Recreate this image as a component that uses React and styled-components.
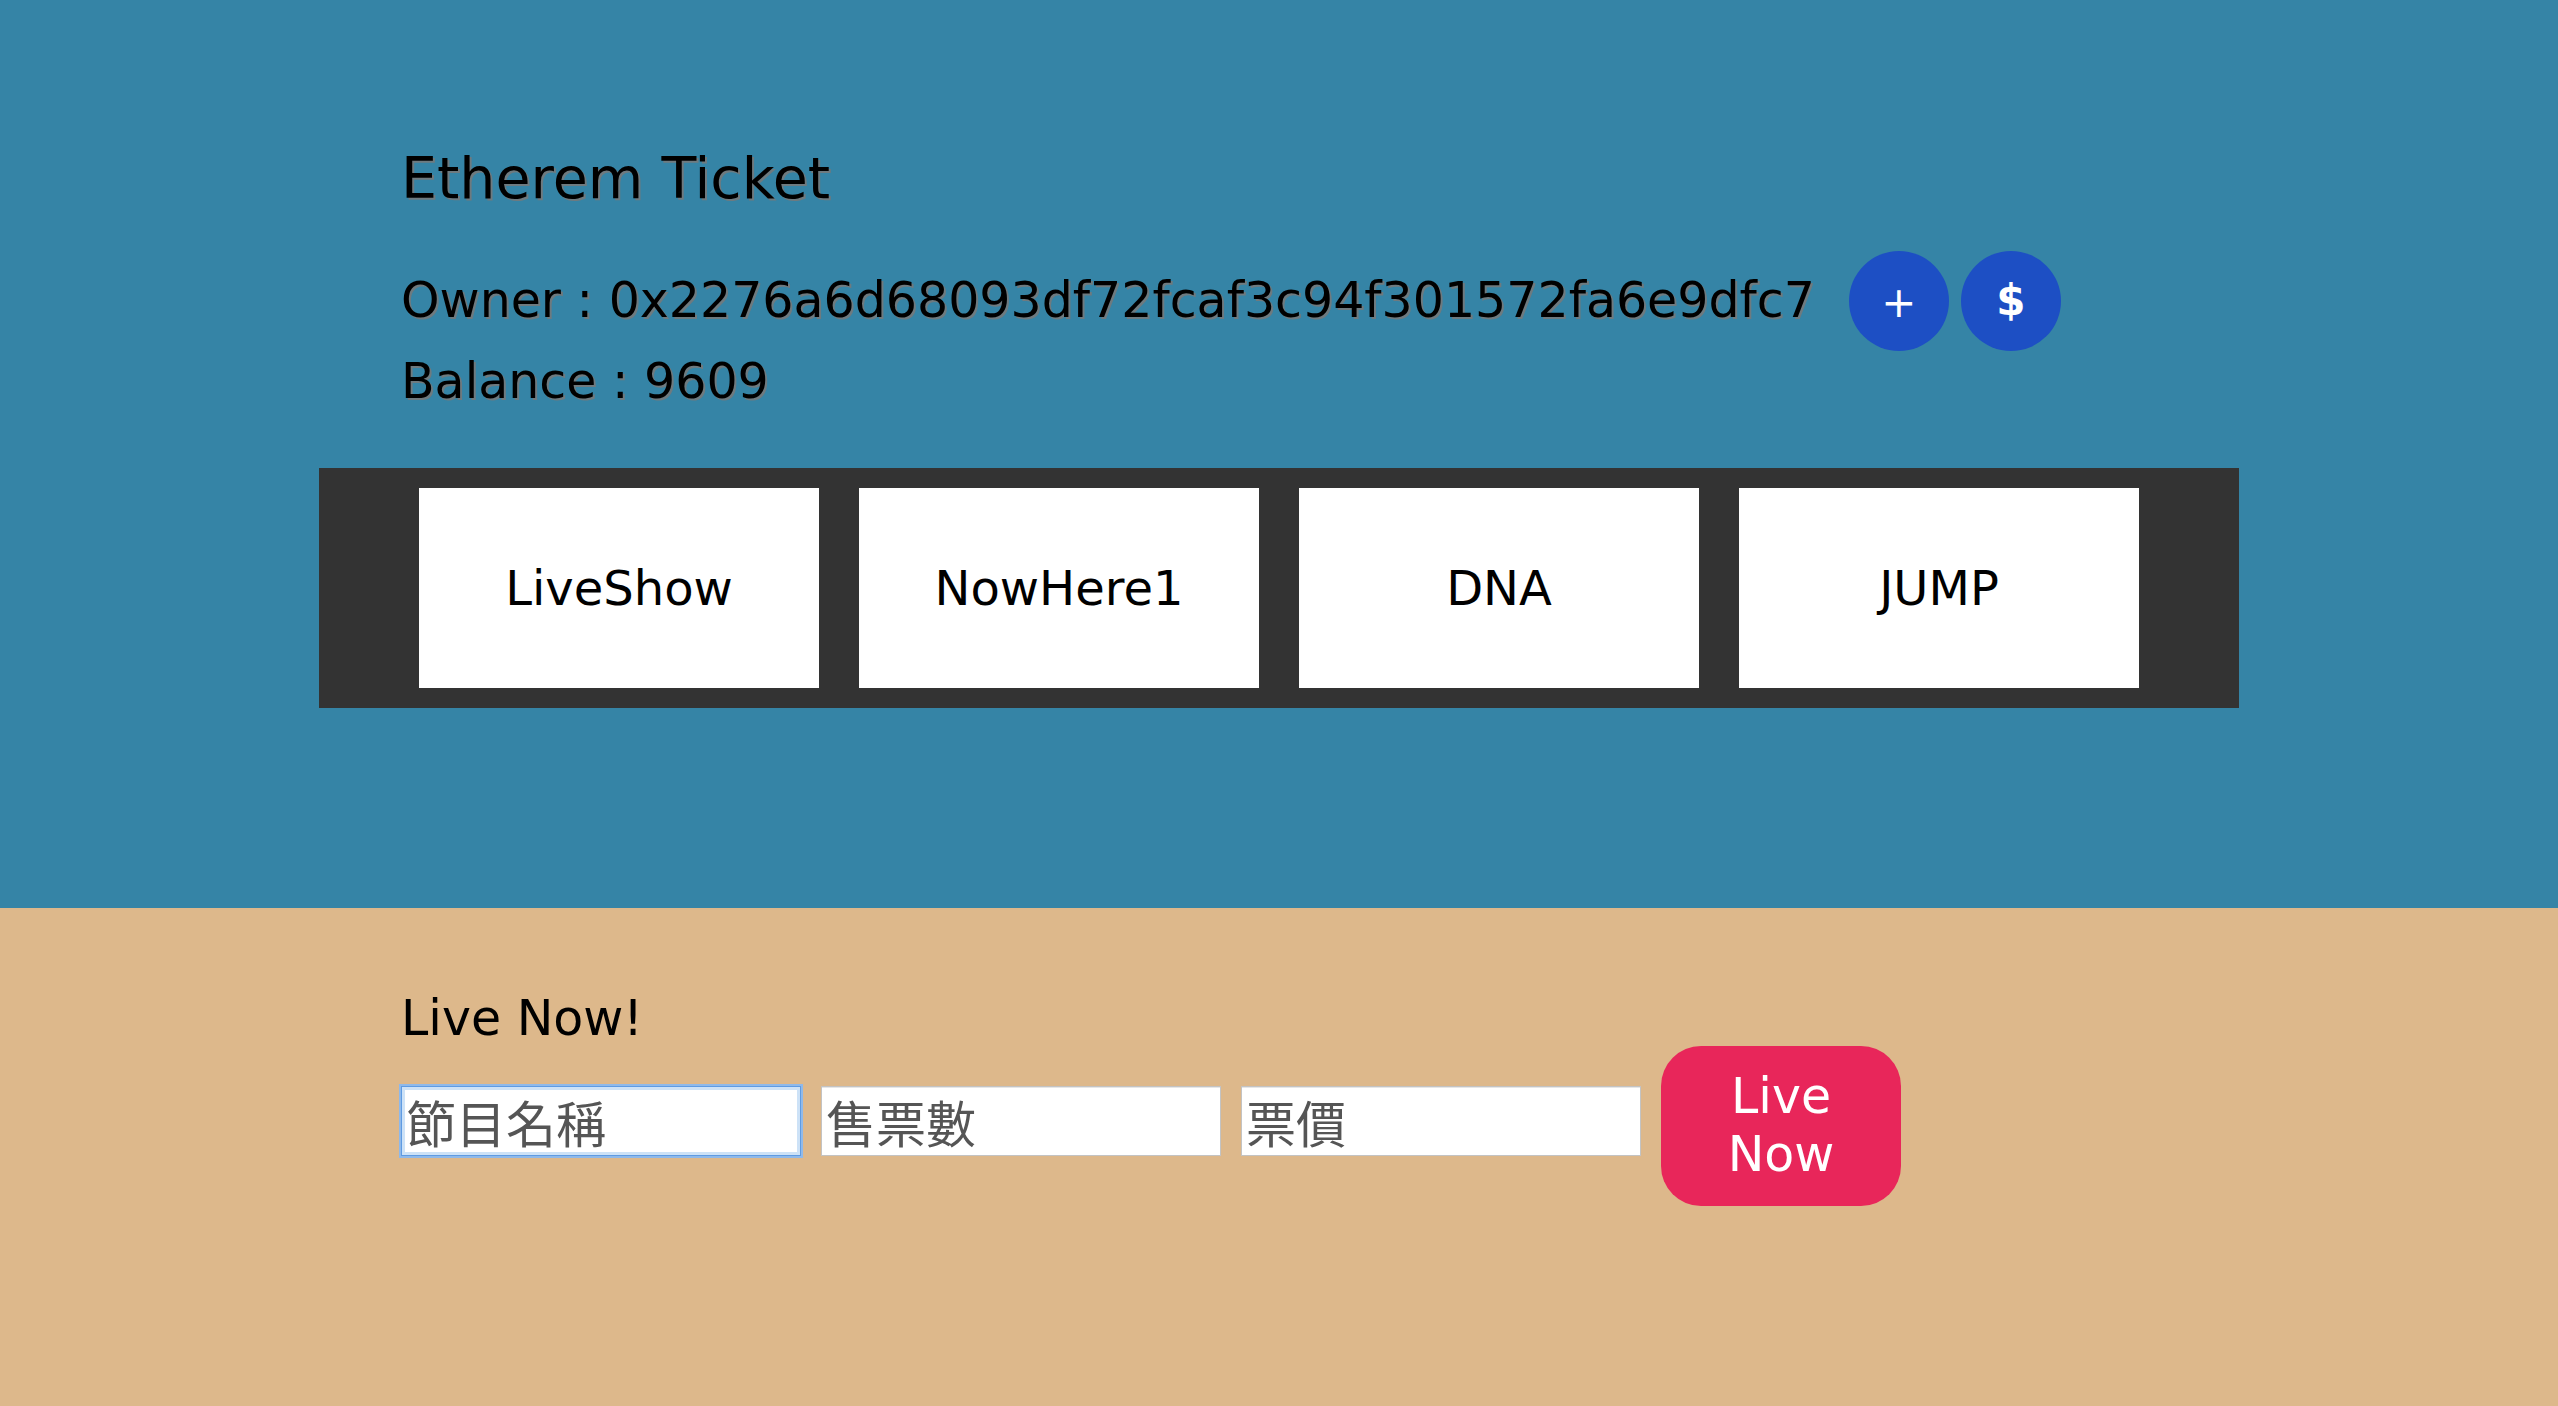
import React from "react";
import styled, { createGlobalStyle } from "styled-components";

const GlobalStyle = createGlobalStyle`
  html, body {
    margin: 0;
    padding: 0;
    font-family: "DejaVu Sans", "Noto Sans CJK TC", sans-serif;
  }
  * { box-sizing: border-box; }
`;

const TopSection = styled.section`
  background: #3584a6;
  height: 908px;
  padding-top: 143px;
`;

const BottomSection = styled.section`
  background: #ddb88b;
  height: 498px;
  padding-top: 83px;
`;

const Container = styled.div`
  width: 1920px;
  margin: 0 auto;
`;

const Inner = styled.div`
  padding-left: 82px;
`;

const Title = styled.h1`
  margin: 0 0 47px;
  font-size: 57px;
  line-height: 70px;
  font-weight: normal;
  color: #000;
  text-shadow: 2px 2px 0 rgba(120, 120, 120, 0.85);
`;

const InfoLine = styled.div`
  font-size: 49px;
  line-height: 81px;
  height: 81px;
  color: #000;
  text-shadow: 2px 2px 0 rgba(120, 120, 120, 0.85);
  display: flex;
  align-items: center;
  white-space: nowrap;
`;

const CircleGroup = styled.div`
  display: flex;
  gap: 12px;
  margin-left: 34px;
`;

const CircleButton = styled.button`
  flex: none;
  width: 100px;
  height: 100px;
  border-radius: 50%;
  border: none;
  padding: 0;
  background: #1d4fc4;
  color: #fff;
  font-family: "DejaVu Sans", sans-serif;
  font-size: 42px;
  font-weight: ${(p) => (p.$bold ? "bold" : "normal")};
  line-height: 100px;
  text-shadow: none;
  display: flex;
  align-items: center;
  justify-content: center;
  padding-top: ${(p) => p.$dy || 0}px;
`;

const ShowBar = styled.div`
  margin-top: 46px;
  background: #333333;
  padding: 20px 100px;
  display: flex;
  gap: 40px;
`;

const ShowCard = styled.div`
  width: 400px;
  height: 200px;
  background: #fff;
  display: flex;
  align-items: center;
  justify-content: center;
  font-size: 48px;
  color: #000;
`;

const SectionLabel = styled.div`
  font-size: 49px;
  line-height: 56px;
  color: #000;
`;

const FormRow = styled.div`
  display: flex;
  align-items: flex-start;
  gap: 20px;
  margin-top: -1px;
`;

const TextInput = styled.input`
  width: 400px;
  height: 70px;
  margin-top: 40px;
  background: #fff;
  border: 1px solid ${(p) => (p.$focused ? "#5f9be2" : "#c3c3c3")};
  box-shadow: ${(p) =>
    p.$focused
      ? "0 0 0 2px #8fb9ea, inset 0 0 0 3px #cde2f7"
      : "inset 0 1px 0 #e6e6e6"};
  padding: 0 0 0 4px;
  font-family: "Noto Sans CJK TC", "DejaVu Sans", sans-serif;
  font-size: 50px;
  color: #333;
  outline: none;
  &::placeholder {
    color: #555;
  }
`;

const LiveButton = styled.button`
  width: 240px;
  height: 160px;
  border: none;
  border-radius: 40px;
  background: #e8265a;
  color: #fff;
  font-family: "DejaVu Sans", sans-serif;
  font-size: 49px;
  line-height: 58px;
  padding: 0 30px;
`;

const shows = ["LiveShow", "NowHere1", "DNA", "JUMP"];

export default function App() {
  return (
    <>
      <GlobalStyle />
      <TopSection>
        <Container>
          <Inner>
            <Title>Etherem Ticket</Title>
            <InfoLine>
              Owner : 0x2276a6d68093df72fcaf3c94f301572fa6e9dfc7
              <CircleGroup>
                <CircleButton $dy={4}>+</CircleButton>
                <CircleButton $bold>$</CircleButton>
              </CircleGroup>
            </InfoLine>
            <InfoLine>Balance : 9609</InfoLine>
          </Inner>
          <ShowBar>
            {shows.map((s) => (
              <ShowCard key={s}>{s}</ShowCard>
            ))}
          </ShowBar>
        </Container>
      </TopSection>
      <BottomSection>
        <Container>
          <Inner>
            <SectionLabel>Live Now!</SectionLabel>
            <FormRow>
              <TextInput $focused placeholder="節目名稱" />
              <TextInput placeholder="售票數" />
              <TextInput placeholder="票價" />
              <LiveButton>Live Now</LiveButton>
            </FormRow>
          </Inner>
        </Container>
      </BottomSection>
    </>
  );
}
